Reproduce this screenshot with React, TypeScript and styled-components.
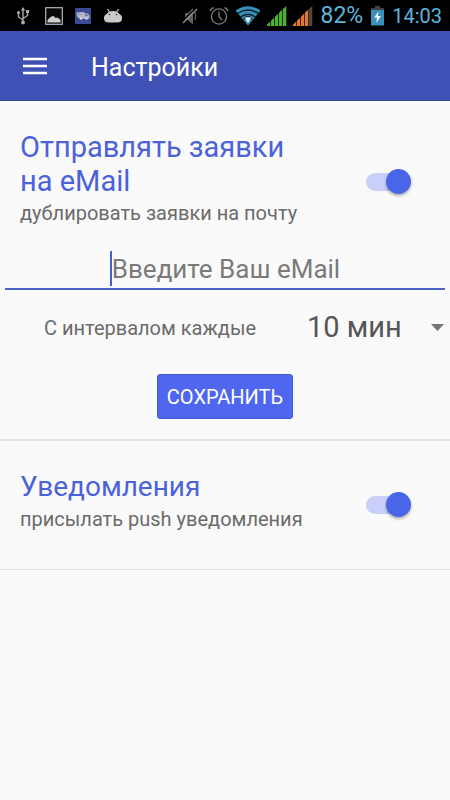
import React, { useState } from "react";
import styled, { createGlobalStyle } from "styled-components";

const GlobalStyle = createGlobalStyle`
  * { box-sizing: border-box; }
  body { margin: 0; background: #fafafa; font-family: Roboto, sans-serif; }
  button, input, select { font-family: inherit; }
`;

const Screen = styled.div`
  min-height: 100vh;
  background: #fafafa;
  color: #6b6b6b;
`;

const StatusBar = styled.div`
  display: flex;
  justify-content: space-between;
  height: 31px;
  padding: 0 8px 0 13px;
  background: #000;
`;

const StatusGroup = styled.div<{ $gap: number }>`
  display: flex;
  align-items: center;
  gap: ${(p) => p.$gap}px;
`;

const StatusText = styled.span<{ $size: number }>`
  color: #5eb4dc;
  font-size: ${(p) => p.$size}px;
  line-height: 32px;
`;

const AppBar = styled.header`
  display: flex;
  align-items: center;
  gap: 44px;
  height: 70px;
  padding: 0 23px;
  background: #3f51b5;
  border-bottom: 1px solid #35459c;
`;

const MenuButton = styled.button`
  display: flex;
  padding: 0;
  border: 0;
  background: none;
  cursor: pointer;
`;

const AppTitle = styled.h1`
  margin: 0;
  padding-top: 4px;
  color: #fff;
  font-size: 25px;
  font-weight: 400;
  line-height: 32px;
`;

const Section = styled.section<{ $line: number }>`
  border-bottom: ${(p) => p.$line}px solid #e4e4e4;
`;

const SettingRow = styled.label<{ $top: number }>`
  display: flex;
  align-items: center;
  justify-content: space-between;
  padding: ${(p) => p.$top}px 39px 0 20px;
  cursor: pointer;
`;

const SettingText = styled.span`
  flex: 0 1 300px;
`;

const SettingTitle = styled.span<{ $size: number }>`
  display: block;
  color: #4b62da;
  font-size: ${(p) => p.$size}px;
  line-height: 34px;
`;

const SettingNote = styled.span`
  display: block;
  font-size: 20px;
  line-height: 24px;
  padding-top: 3px;
`;

const Switch = styled.input`
  appearance: none;
  display: flex;
  align-items: center;
  justify-content: flex-start;
  flex: none;
  width: 45px;
  height: 18px;
  margin: 8px 0 0;
  background: #c9cff8;
  border-radius: 9px;
  cursor: pointer;

  &::before {
    content: "";
    flex: none;
    width: 25px;
    height: 25px;
    border-radius: 50%;
    background: #f5f5f5;
    box-shadow: 0 2px 3px rgba(0, 0, 0, 0.3);
  }
  &:checked { justify-content: flex-end; }
  &:checked::before { background: #4a66e8; }
`;

const EmailField = styled.label`
  display: flex;
  align-items: center;
  justify-content: center;
  margin: 26px 5px 0;
  padding-bottom: 2px;
  border-bottom: 2px solid #4961c8;
`;

const Caret = styled.span`
  width: 2px;
  height: 35px;
  background: #4961d0;
`;

const EmailInput = styled.input`
  field-sizing: content;
  max-width: 100%;
  height: 35px;
  padding: 0;
  border: 0;
  outline: 0;
  background: none;
  color: #555;
  caret-color: transparent;
  font-size: 26px;
  &::placeholder { color: #7a7a7a; opacity: 1; }
`;

const IntervalRow = styled.div`
  display: flex;
  align-items: center;
  justify-content: space-between;
  padding: 16px 6px 0 44px;
`;

const IntervalLabel = styled.label`
  font-size: 20px;
  line-height: 40px;
  padding-top: 2px;
`;

const Picker = styled.div`
  display: grid;
  align-items: center;
  width: 137px;
`;

const PickerSelect = styled.select`
  grid-area: 1 / 1;
  appearance: none;
  width: 100%;
  height: 40px;
  padding: 0 36px 0 0;
  border: 0;
  background: none;
  color: #555;
  font-size: 29px;
  cursor: pointer;
`;

const PickerArrow = styled.svg`
  grid-area: 1 / 1;
  justify-self: end;
  pointer-events: none;
`;

const SaveButton = styled.button`
  display: block;
  margin: 26px auto 20px;
  padding: 0 9px;
  height: 45px;
  border: 1px solid #4459d4;
  border-radius: 3px;
  background: #4e67ee;
  color: #fff;
  font-size: 20px;
  cursor: pointer;
`;

const Spacer = styled.div`
  height: 38px;
`;

const UsbIcon = () => (
  <svg width="20" height="20" viewBox="0 0 20 20" fill="none" stroke="#a9a9a9" strokeWidth="1.4">
    <path d="M10 16V3M10 14L5.500 11V6.500M10 12.500L14.500 9.500V5.500" />
    <path d="M7.800 4.500L10 1L12.200 4.500Z" fill="#a9a9a9" stroke="none" />
    <circle cx="10" cy="16.500" r="2" fill="#a9a9a9" stroke="none" />
    <circle cx="5.500" cy="6.500" r="1.500" fill="#a9a9a9" stroke="none" />
    <rect x="13" y="4" width="3" height="3" fill="#a9a9a9" stroke="none" />
  </svg>
);

const PictureIcon = () => (
  <svg width="18" height="18" viewBox="0 0 18 18">
    <rect x="0.700" y="0.700" width="16.600" height="16.600" fill="#0a0a0a" stroke="#b5b5b5" strokeWidth="1.200" />
    <path d="M2.500 15.500V13L4.500 11L6.500 9.500L8.500 9L10.500 11L12.500 10.500L15.500 13V15.500Z" fill="#cfcfcf" />
  </svg>
);

const VanIcon = () => (
  <svg width="16" height="16" viewBox="0 0 16 16">
    <rect width="16" height="16" rx="1" fill="#3c4a96" />
    <path d="M1.500 4.500L9 4V5L12.500 5.500L14.500 7.500V10.500L5 11L2 8.500Z" fill="#b5b8c8" />
    <path d="M10 6L12.300 6.500L13 8H10.500Z M3 6.500H7" fill="#4b5587" stroke="#858cae" strokeWidth="0.700" />
    <circle cx="6" cy="10.500" r="1.300" fill="#d5d6dc" />
    <circle cx="11.500" cy="10.500" r="1.300" fill="#d5d6dc" />
  </svg>
);

const DroidIcon = () => (
  <svg width="20" height="16" viewBox="0 0 20 16">
    <path d="M4.500 1L6.500 4M15.500 1L13.500 4" stroke="#c4c4c4" strokeWidth="1.200" />
    <path d="M3.500 6Q5.500 3 10 3T16.500 6Q19.500 7.500 19 11Q18.500 14.500 14 14.500H6Q1.500 14.500 1 11Q.5 7.500 3.500 6Z" fill="#c9c9c9" />
    <circle cx="6.500" cy="6.500" r=".8" fill="#333" />
    <circle cx="13.500" cy="6.500" r=".8" fill="#333" />
  </svg>
);

const MuteIcon = () => (
  <svg width="24" height="20" viewBox="-3 0 24 20">
    <path d="M3 7H6L11 2V18.500L6 14H3Z" fill="#626262" />
    <path d="M13 6.500Q14.500 10 13 14" fill="none" stroke="#626262" strokeWidth="1.300" />
    <path d="M0 15.500L13.500 2.500" stroke="#000" strokeWidth="1.200" />
    <path d="M1 17L15 3" stroke="#8a8a8a" strokeWidth="1.600" />
  </svg>
);

const AlarmIcon = () => (
  <svg width="20" height="20" viewBox="0 0 20 20" fill="none" stroke="#777" strokeWidth="1.400">
    <circle cx="10" cy="10.500" r="7.600" />
    <path d="M10 5.500V10.500L13 14M1 5Q2 2.500 4.500 1.500M19 5Q18 2.500 15.500 1.500" />
  </svg>
);

const WifiIcon = () => (
  <svg width="26" height="20" viewBox="0 0 26 20">
    <path d="M0.500 4.500Q13 -4 25.500 4.500L13 19.500Z" fill="#3a90b7" />
    <path d="M2.500 7.500Q13 0.500 23.500 7.500M5.500 11Q13 5.500 20.500 11" fill="none" stroke="#04202e" strokeWidth="1.500" />
    <path d="M8.500 14.500Q9 10.500 13 10Q17 10.500 17.500 14.500" fill="none" stroke="#04202e" strokeWidth="1" />
    <path d="M9.800 11.500H16.200L13 17Z" fill="#e5f4fa" />
  </svg>
);

const SIGNAL_BARS = [
  "M0 20V18.500L3.300 15.500V20Z",
  "M4 20V14.700L7.300 11.500V20Z",
  "M8 20V10.700L11.300 7.500V20Z",
  "M12 20V6.700L15.300 3.500V20Z",
  "M16 20V3L19.300 0V20Z",
];

const SignalIcon = ({ color, level }: { color: string; level: number }) => (
  <svg width="20" height="20" viewBox="0 0 20 20">
    {SIGNAL_BARS.map((d, i) => (
      <path key={d} d={d} fill={i < level ? color : "#4c4740"} />
    ))}
  </svg>
);

const BatteryIcon = () => (
  <svg width="13" height="20" viewBox="0 0 13 20">
    <path d="M4 0H9V2H13V5H0V2H4Z" fill="#3d4448" />
    <rect y="4" width="13" height="15.500" fill="#398fb5" />
    <path d="M7.500 5.500L3 11.500H6L5.200 17L10 10H7Z" fill="#f2fbff" />
  </svg>
);

const MenuIcon = () => (
  <svg width="24" height="18" viewBox="0 0 24 18" stroke="#fff" strokeWidth="2.600">
    <path d="M0 2H24M0 9H24M0 16H24" />
  </svg>
);

interface ToggleProps {
  title: string;
  note: string;
  top: number;
  titleSize: number;
}

function ToggleSetting({ title, note, top, titleSize }: ToggleProps) {
  const [on, setOn] = useState(true);
  return (
    <SettingRow $top={top}>
      <SettingText>
        <SettingTitle $size={titleSize}>{title}</SettingTitle>
        <SettingNote>{note}</SettingNote>
      </SettingText>
      <Switch type="checkbox" checked={on} onChange={(e) => setOn(e.target.checked)} />
    </SettingRow>
  );
}

export default function App() {
  const [email, setEmail] = useState("");
  return (
    <Screen>
      <GlobalStyle />
      <StatusBar>
        <StatusGroup $gap={12}>
          <UsbIcon />
          <PictureIcon />
          <VanIcon />
          <DroidIcon />
        </StatusGroup>
        <StatusGroup $gap={7}>
          <StatusGroup $gap={6}>
            <MuteIcon />
            <AlarmIcon />
            <WifiIcon />
            <SignalIcon color="#4caf2f" level={5} />
            <SignalIcon color="#e5762f" level={4} />
          </StatusGroup>
          <StatusGroup $gap={8}>
            <StatusText $size={23}>82%</StatusText>
            <BatteryIcon />
            <StatusText $size={20}>14:03</StatusText>
          </StatusGroup>
        </StatusGroup>
      </StatusBar>
      <AppBar>
        <MenuButton aria-label="Меню">
          <MenuIcon />
        </MenuButton>
        <AppTitle>Настройки</AppTitle>
      </AppBar>
      <main>
        <Section $line={2}>
          <ToggleSetting
            title="Отправлять заявки на eMail"
            note="дублировать заявки на почту"
            top={29}
            titleSize={29}
          />
          <EmailField>
            <Caret />
            <EmailInput
              type="email"
              aria-label="eMail"
              placeholder="Введите Ваш eMail"
              value={email}
              onChange={(e) => setEmail(e.target.value)}
            />
          </EmailField>
          <IntervalRow>
            <IntervalLabel htmlFor="interval">С интервалом каждые</IntervalLabel>
            <Picker>
              <PickerSelect id="interval" defaultValue="10">
                <option value="10">10 мин</option>
                <option value="30">30 мин</option>
                <option value="60">60 мин</option>
              </PickerSelect>
              <PickerArrow width="13" height="7" viewBox="0 0 13 7">
                <path d="M0 0H13L6.500 7Z" fill="#757575" />
              </PickerArrow>
            </Picker>
          </IntervalRow>
          <SaveButton type="button">СОХРАНИТЬ</SaveButton>
        </Section>
        <Section $line={1}>
          <ToggleSetting
            title="Уведомления"
            note="присылать push уведомления"
            top={29}
            titleSize={28}
          />
          <Spacer />
        </Section>
      </main>
    </Screen>
  );
}
